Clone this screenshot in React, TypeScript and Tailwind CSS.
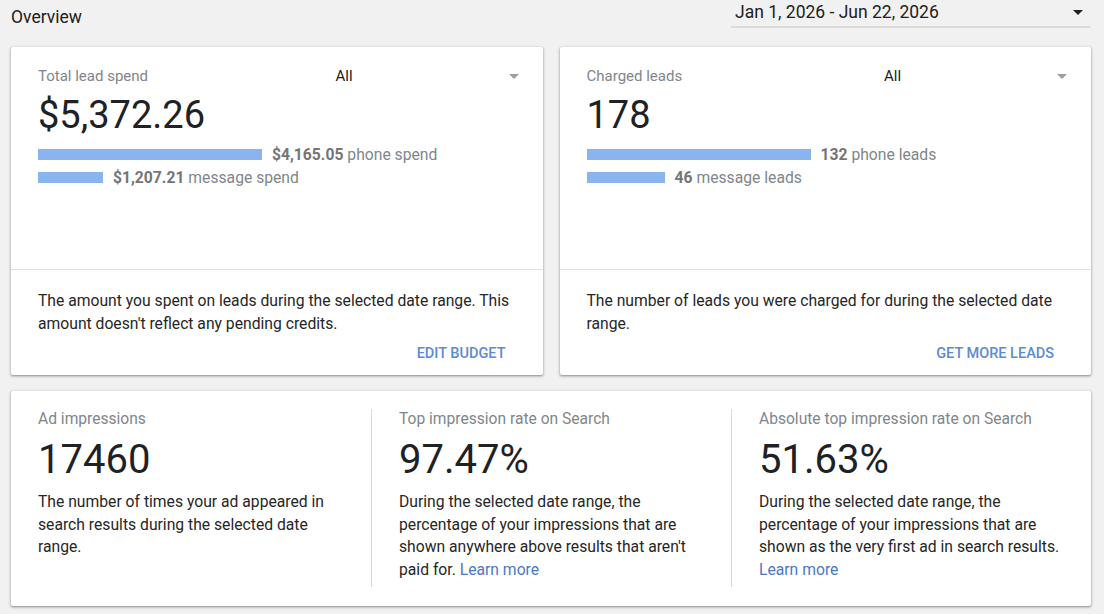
import React from "react";

const font = { fontFamily: "Roboto, 'Noto Sans', sans-serif" };

function Caret({ className }: { className: string }) {
  return (
    <svg width="10" height="5" viewBox="0 0 10 5" className={className}>
      <path d="M0 0h10L5 5z" fill="currentColor" />
    </svg>
  );
}

type Bar = { value: string; label: string; width: number };

function LeadCard({
  title,
  total,
  bars,
  description,
  action,
}: {
  title: string;
  total: string;
  bars: Bar[];
  description: string;
  action: string;
}) {
  return (
    <div className="flex flex-col rounded-[2px] bg-white shadow-[0_1px_2px_rgba(0,0,0,0.3),0_1px_3px_1px_rgba(0,0,0,0.12)]">
      {/* Top */}
      <div className="h-[223px] pl-[27px] pr-[24px] pt-[19px] border-b border-[#e0e0e0]">
        <div className="flex items-center h-5">
          <span className="flex-1 text-[15px] text-[#80868b]">{title}</span>
          <div className="flex items-center justify-between w-[183px]">
            <span className="text-[15px] text-[#202124]">All</span>
            <Caret className="text-[#9e9e9e]" />
          </div>
        </div>
        <div className="mt-[7px] text-[38px] leading-[44px] text-[#202124]">{total}</div>
        <div className="mt-[6px] flex flex-col">
          {bars.map((b) => (
            <div key={b.label} className="flex items-center h-[23px]">
              <div className="h-[11px] bg-[#8ab4f0]" style={{ width: b.width }} />
              <span className="ml-[10px] text-[15.7px] text-[#80868b]">
                <span className="font-bold text-[#757575]">{b.value}</span> {b.label}
              </span>
            </div>
          ))}
        </div>
      </div>
      {/* Bottom */}
      <div className="pl-[27px] pr-[29px] pt-[19px] pb-[3px]">
        <p className="text-[15.7px] leading-[23px] text-[#262626]">{description}</p>
        <div className="mt-[1px] flex justify-end">
          <button className="h-9 px-2 text-[14.5px] font-medium uppercase text-[#5b8ad6]">{action}</button>
        </div>
      </div>
    </div>
  );
}

function Metric({
  title,
  value,
  children,
  divider,
}: {
  title: string;
  value: string;
  children: React.ReactNode;
  divider?: boolean;
}) {
  return (
    <div className={`pl-[27px] pr-[27px] pb-[6px] ${divider ? "border-l border-[#dadada]" : ""}`}>
      <div className="text-[15.6px] leading-5 text-[#80868b]">{title}</div>
      <div className="mt-[9px] text-[40px] leading-[44px] text-[#202124]">{value}</div>
      <p className="mt-[9px] text-[15.7px] leading-[22.5px] text-[#262626]">{children}</p>
    </div>
  );
}

export default function App() {
  return (
    <div className="min-h-screen bg-[#f1f1f1] pl-[11px] pr-[13px]" style={font}>
      {/* Header */}
      <div className="flex items-start justify-between">
        <h1 className="mt-[6px] text-[17.5px] leading-[22px] text-[#202124]">Overview</h1>
        <div className="flex w-[360px] h-[28px] items-start justify-between border-b-2 border-[#dcdcdc] pl-[4px] pr-[8px]">
          <span className="mt-[1px] text-[17.5px] leading-[22px] text-[#202124]">Jan 1, 2026 - Jun 22, 2026</span>
          <Caret className="mt-[10px] text-[#202124]" />
        </div>
      </div>

      {/* Lead cards */}
      <div className="mt-[19px] grid grid-cols-2 gap-[17px]">
        <LeadCard
          title="Total lead spend"
          total="$5,372.26"
          bars={[
            { value: "$4,165.05", label: "phone spend", width: 224 },
            { value: "$1,207.21", label: "message spend", width: 65 },
          ]}
          description="The amount you spent on leads during the selected date range. This amount doesn't reflect any pending credits."
          action="Edit budget"
        />
        <LeadCard
          title="Charged leads"
          total="178"
          bars={[
            { value: "132", label: "phone leads", width: 224 },
            { value: "46", label: "message leads", width: 78 },
          ]}
          description="The number of leads you were charged for during the selected date range."
          action="Get more leads"
        />
      </div>

      {/* Impressions */}
      <div className="mt-[16px] grid grid-cols-3 rounded-[2px] bg-white pt-[18px] pb-[19px] shadow-[0_1px_2px_rgba(0,0,0,0.3),0_1px_3px_1px_rgba(0,0,0,0.12)]">
        <Metric title="Ad impressions" value="17460">
          The number of times your ad appeared in search results during the selected date range.
        </Metric>
        <Metric title="Top impression rate on Search" value="97.47%" divider>
          During the selected date range, the percentage of your impressions that are shown anywhere above results
          that aren't paid for. <a className="text-[#4a78c8]">Learn more</a>
        </Metric>
        <Metric title="Absolute top impression rate on Search" value="51.63%" divider>
          During the selected date range, the percentage of your impressions that are shown as the very first ad in
          search results. <a className="text-[#4a78c8]">Learn more</a>
        </Metric>
      </div>
    </div>
  );
}
